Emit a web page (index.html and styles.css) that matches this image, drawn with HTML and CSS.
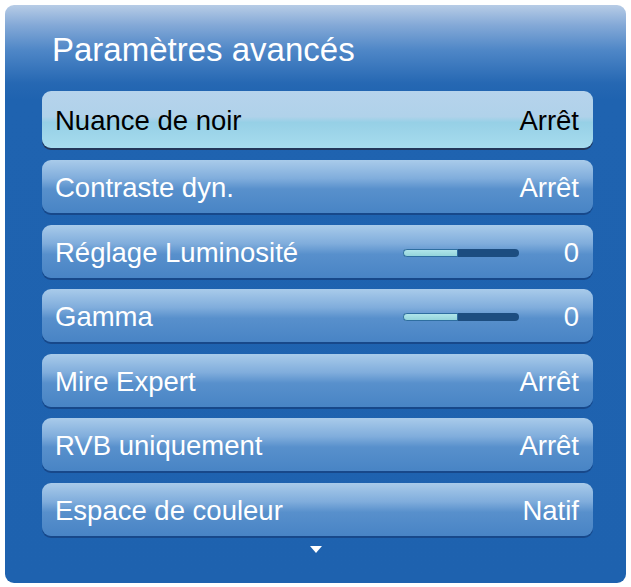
FILE: index.html
```html
<!DOCTYPE html>
<html lang="fr">
<head>
<meta charset="UTF-8">
<title>Paramètres avancés</title>
<link rel="stylesheet" href="styles.css">
</head>
<body>
  <div class="panel">
    <h1 class="title">Paramètres avancés</h1>
    <div class="list">
      <div class="row selected"><span>Nuance de noir</span><span>Arrêt</span></div>
      <div class="row"><span>Contraste dyn.</span><span>Arrêt</span></div>
      <div class="row"><span>Réglage Luminosité</span>
        <div class="right"><div class="slider"><div class="fill" style="width:48%"></div></div><span>0</span></div>
      </div>
      <div class="row"><span>Gamma</span>
        <div class="right"><div class="slider"><div class="fill" style="width:48%"></div></div><span>0</span></div>
      </div>
      <div class="row"><span>Mire Expert</span><span>Arrêt</span></div>
      <div class="row"><span>RVB uniquement</span><span>Arrêt</span></div>
      <div class="row"><span>Espace de couleur</span><span>Natif</span></div>
    </div>
    <div class="more"></div>
  </div>
</body>
</html>
```

FILE: styles.css
```css
body {
  margin: 0;
  background: #fff;
  font-family: "Liberation Sans", Arial, sans-serif;
}
.panel {
  margin: 5px 5px 4px 5px;
  height: 578px;
  box-sizing: border-box;
  border-radius: 9px;
  background: linear-gradient(to bottom, #b7cce6 0px, #84a9d7 20px, #4f87c7 45px, #2668b3 78px, #1f63b0 95px, #1e62af 100%);
  padding: 26px 33px 0 37px;
}
.title {
  margin: 0 0 0 10px;
  font-weight: normal;
  font-size: 33px;
  color: #fff;
  line-height: 38px;
  height: 60px;
}
.list {
  display: flex;
  flex-direction: column;
  gap: 11.5px;
}
.row {
  height: 53px;
  flex: none;
  box-sizing: border-box;
  border-radius: 9px;
  display: flex;
  align-items: center;
  justify-content: space-between;
  padding: 3px 14px 0 13px;
  font-size: 27.5px;
  color: #fff;
  background: linear-gradient(to bottom, #a9cbea 0%, #80addc 35%, #5890cc 55%, #4884c5 100%);
  box-shadow: 0 2px 0 #17488a;
}
.row.selected {
  color: #000;
  height: 57px;
  margin-bottom: 0.5px;
  background: linear-gradient(to bottom, #b6d3ec 0%, #b0d2ea 45%, #96d0e6 55%, #a7dcee 100%);
  box-shadow: 0 2px 0 #23375a;
}
.right {
  display: flex;
  align-items: center;
  gap: 45px;
}
.slider {
  width: 116px;
  height: 8px;
  border-radius: 4px;
  background: #1c4d80;
  overflow: hidden;
}
.fill {
  height: 100%;
  background: linear-gradient(to bottom, #b5e8ec, #8fd2d8);
  border-radius: 4px 0 0 4px;
  box-shadow: inset 0 0 0 1px #2e6ea0;
}
.more {
  width: 0;
  height: 0;
  margin: 10px auto 0;
  border-left: 6px solid transparent;
  border-right: 6px solid transparent;
  border-top: 7px solid #fff;
  position: relative;
  left: -2px;
}
```
